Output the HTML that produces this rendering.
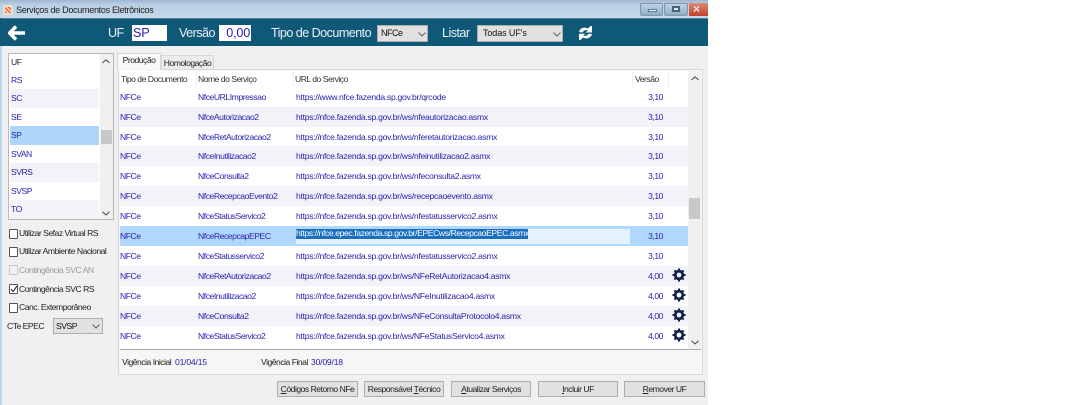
<!DOCTYPE html>
<html><head><meta charset="utf-8"><style>
html,body{margin:0;padding:0;background:#fff}
#w{position:relative;width:1080px;height:405px;overflow:hidden;background:#fff;font-family:"Liberation Sans",sans-serif;font-size:8.6px;letter-spacing:-.5px;color:#222;filter:blur(.35px)}
#w div,#w span.a{position:absolute;white-space:nowrap;box-sizing:border-box}
.t{line-height:12px;height:12px}
.b{color:#2a22b0}
.r{left:120px;width:568px;height:20px}
.alt{background:#f2f2f8}
.r span{position:absolute;top:4px;line-height:12px;color:#2a22b0;white-space:nowrap;letter-spacing:-.45px}
.r .c1{left:0}.r .c2{left:78px}.r .c3{left:176px;letter-spacing:-.28px}.r .c4{right:25px}
.r svg{position:absolute;left:552px;top:2px}
.li{left:10px;width:89px;height:18.5px;line-height:18px;color:#2a22b0;padding-left:1px}
.cb{left:9px;width:9px;height:10px;border:1px solid #555;background:#fff;border-radius:1px}
.btn{top:381px;height:16px;background:#e1e1e1;border:1px solid #adadad;text-align:center;line-height:14px;color:#222}
.sel{background:#e1e1e1;border:1px solid #adadad;color:#111;line-height:15px}
.hl{color:#eaf2f6;font-size:12.6px;letter-spacing:-.55px;line-height:16px;top:25px}
.hd{top:73px;color:#333;line-height:12px}
.sep{top:72px;width:1px;height:15px;background:#eee}
u{text-decoration:underline}
</style></head><body><div id="w">
<div style="left:0;top:0;width:708px;height:405px;background:#f0f0f0"></div>
<div style="left:0;top:46px;width:2px;height:359px;background:#bcd4ec"></div>
<div style="left:0;top:0;width:708px;height:18px;background:linear-gradient(#9db7d0,#b9d0e4 25%,#c6d9ea)"></div>
<div style="left:3px;top:5px;width:10px;height:10px;background:#f6d9c8;border:1px solid #e8e0d8"></div>
<div style="left:5px;top:7px;width:6px;height:6px;background:repeating-linear-gradient(45deg,#e8692a 0 1.5px,#f8e0d0 1.5px 3px)"></div>
<div class="t" style="left:16px;top:4px;font-size:9.1px;letter-spacing:-.33px;color:#222">Serviços de Documentos Eletrônicos</div>
<div style="left:640px;top:3px;width:23px;height:13px;background:linear-gradient(#c0d4e6,#8eabc6);border:1px solid #7e97ae;border-radius:2px"></div>
<div style="left:648px;top:9px;width:8px;height:2px;background:#eef4f8;border:1px solid #5d7a94;box-sizing:content-box;height:1px;width:7px"></div>
<div style="left:664px;top:3px;width:24px;height:13px;background:linear-gradient(#c0d4e6,#8eabc6);border:1px solid #7e97ae;border-radius:2px"></div>
<div style="left:672px;top:6px;width:8px;height:6px;border:2px solid #46627c;background:#dfe9f2"></div>
<div style="left:689px;top:3px;width:19px;height:13px;background:linear-gradient(#d98a78,#c4402c)"></div>
<div style="left:693px;top:1px;font-size:12px;font-weight:bold;color:#f4e8e4;line-height:16px">×</div>

<div style="left:0;top:18px;width:708px;height:28px;background:#0f5878"></div>
<div style="left:1px;top:18px;width:707px;height:1px;background:#4e7f9a"></div>
<svg style="position:absolute;left:8px;top:25px" width="18" height="16" viewBox="0 0 18 16"><path d="M8 1.5 L1.5 8 L8 14.5 M2.5 8 H17" fill="none" stroke="#fff" stroke-width="3.4"/></svg>
<div class="hl" style="left:108px">UF</div>
<div style="left:132px;top:25px;width:35px;height:16px;background:#fff;color:#2a22b0;font-size:12.6px;letter-spacing:-.2px;line-height:16px;padding-left:1px">SP</div>
<div class="hl" style="left:179px">Versão</div>
<div style="left:219px;top:25px;width:32px;height:16px;background:#fff;color:#2a22b0;font-size:12.6px;letter-spacing:-.2px;line-height:16px;text-align:right;padding-right:1px">0,00</div>
<div class="hl" style="left:271px">Tipo de Documento</div>
<div class="sel" style="left:377px;top:25px;width:51px;height:17px;font-size:9px;padding-left:3px">NFCe</div>
<svg style="position:absolute;left:418px;top:32px" width="8" height="5"><path d="M.5 .5L4 4L7.500 .5" fill="none" stroke="#666"/></svg>
<div class="hl" style="left:442px">Listar</div>
<div class="sel" style="left:477px;top:25px;width:86px;height:17px;font-size:9px;letter-spacing:-.1px;padding-left:5px">Todas UF's</div>
<svg style="position:absolute;left:553px;top:32px" width="8" height="5"><path d="M.5 .5L4 4L7.500 .5" fill="none" stroke="#666"/></svg>
<svg style="position:absolute;left:577px;top:25px" width="17" height="16" viewBox="0 0 17 16"><path d="M2 7 C3 3 7 1.500 11 3.500 L13.500 1 L15 1 V7.500 H8.500 L11 5.500 C8.500 4.500 6.500 5.500 5.500 7.500 Z M15 9 C14 13 10 14.500 6 12.500 L3.500 15 L2 15 V8.700 H8.500 L6 10.500 C8.500 11.500 10.500 10.500 11.500 8.700 Z" fill="#fff"/></svg>

<!-- left list -->
<div style="left:8px;top:53px;width:106px;height:167px;background:#fff;border:1px solid #b8b8b8"></div>
<div class="li" style="top:53px;color:#222">UF</div>
<div class="li" style="top:71px">RS</div>
<div class="li alt" style="top:89px">SC</div>
<div class="li" style="top:108px">SE</div>
<div class="li" style="top:126px;background:#aed6fb">SP</div>
<div class="li" style="top:145px">SVAN</div>
<div class="li alt" style="top:163px">SVRS</div>
<div class="li" style="top:182px">SVSP</div>
<div class="li alt" style="top:200px">TO</div>
<div style="left:100px;top:54px;width:13px;height:165px;background:#f0f0f0"></div>
<div style="left:101px;top:130px;width:11px;height:14px;background:#c8c8c8"></div>
<svg style="position:absolute;left:102px;top:59px" width="8" height="5"><path d="M.5 4L4 .8L7.500 4" fill="none" stroke="#444"/></svg>
<svg style="position:absolute;left:102px;top:211px" width="8" height="5"><path d="M.5 .8L4 4L7.500 .8" fill="none" stroke="#444"/></svg>

<div class="cb" style="top:229px"></div><div class="t" style="left:19px;top:227px">Utilizar Sefaz Virtual RS</div>
<div class="cb" style="top:247px"></div><div class="t" style="left:19px;top:245px">Utilizar Ambiente Nacional</div>
<div class="cb" style="top:265px;border-color:#c8c8c8;background:#f0f0f0"></div><div class="t" style="left:19px;top:264px;color:#9a9a9a">Contingência SVC AN</div>
<div class="cb" style="top:284px"></div><div class="t" style="left:19px;top:283px">Contingência SVC RS</div>
<svg style="position:absolute;left:10px;top:285px" width="8" height="8"><path d="M1 4L3.200 6.500L7 1" fill="none" stroke="#333" stroke-width="1.100"/></svg>
<div class="cb" style="top:303px"></div><div class="t" style="left:19px;top:301px">Canc. Extemporâneo</div>
<div class="t" style="left:7px;top:320px">CTe EPEC</div>
<div class="sel" style="left:53px;top:318px;width:50px;height:16px;padding-left:2px;font-size:8.600px;line-height:14px">SVSP</div>
<svg style="position:absolute;left:92px;top:324px" width="8" height="5"><path d="M.5 .5L4 4L7.500 .5" fill="none" stroke="#666"/></svg>

<!-- tabs & frame -->
<div style="left:118px;top:69px;width:585px;height:306px;background:#f6f6f6;border:1px solid #d8d8d8"></div>
<div class="t" style="left:161px;top:55px;width:53px;height:15px;background:#ececec;border:1px solid #d8d8d8;text-align:center;line-height:14px">Homologação</div>
<div class="t" style="left:117px;top:53px;width:44px;height:17px;background:#f8f8f8;border:1px solid #d8d8d8;border-bottom:0;text-align:center;line-height:13px">Produção</div>

<!-- grid -->
<div style="left:120px;top:71px;width:581px;height:279px;background:#fff;border-bottom:1px solid #a8a8a8"></div>
<div style="left:120px;top:71px;width:568px;height:16px;background:#fff"></div>
<div class="hd" style="left:121px">Tipo de Documento</div>
<div class="hd" style="left:198px">Nome do Serviço</div>
<div class="hd" style="left:295px">URL do Serviço</div>
<div class="hd" style="left:635px">Versão</div>
<div class="sep" style="left:196px"></div><div class="sep" style="left:293px"></div><div class="sep" style="left:632px"></div><div class="sep" style="left:668px"></div>

<div class="r" style="top:87px"><span class="c1">NFCe</span><span class="c2">NfceURLImpressao</span><span class="c3">https://www.nfce.fazenda.sp.gov.br/qrcode</span><span class="c4">3,10</span></div>
<div class="r alt" style="top:106.500px"><span class="c1">NFCe</span><span class="c2">NfceAutorizacao2</span><span class="c3">https://nfce.fazenda.sp.gov.br/ws/nfeautorizacao.asmx</span><span class="c4">3,10</span></div>
<div class="r" style="top:126.500px"><span class="c1">NFCe</span><span class="c2">NfceRetAutorizacao2</span><span class="c3">https://nfce.fazenda.sp.gov.br/ws/nferetautorizacao.asmx</span><span class="c4">3,10</span></div>
<div class="r alt" style="top:146px"><span class="c1">NFCe</span><span class="c2">NfceInutilizacao2</span><span class="c3">https://nfce.fazenda.sp.gov.br/ws/nfeinutilizacao2.asmx</span><span class="c4">3,10</span></div>
<div class="r" style="top:166px"><span class="c1">NFCe</span><span class="c2">NfceConsulta2</span><span class="c3">https://nfce.fazenda.sp.gov.br/ws/nfeconsulta2.asmx</span><span class="c4">3,10</span></div>
<div class="r alt" style="top:186px"><span class="c1">NFCe</span><span class="c2">NfceRecepcaoEvento2</span><span class="c3">https://nfce.fazenda.sp.gov.br/ws/recepcaoevento.asmx</span><span class="c4">3,10</span></div>
<div class="r" style="top:206px"><span class="c1">NFCe</span><span class="c2">NfceStatusServico2</span><span class="c3">https://nfce.fazenda.sp.gov.br/ws/nfestatusservico2.asmx</span><span class="c4">3,10</span></div>
<div class="r" style="top:226px;background:#b0d7fc;height:20px"><span class="c1">NFCe</span><span class="c2">NfceRecepcapEPEC</span><span class="c4">3,10</span></div>
<div style="left:296px;top:229px;width:334px;height:15px;background:#e4f1fe"></div>
<div style="left:296px;top:229px;width:232px;height:10px;background:#1a6fc0;color:#fff;line-height:9px;letter-spacing:-.4px;overflow:hidden">https://nfce.epec.fazenda.sp.gov.br/EPECws/RecepcaoEPEC.asmx</div>
<div class="r" style="top:246px"><span class="c1">NFCe</span><span class="c2">NfceStatusservico2</span><span class="c3">https://nfce.fazenda.sp.gov.br/ws/nfestatusservico2.asmx</span><span class="c4">3,10</span></div>
<div class="r alt" style="top:266px"><span class="c1">NFCe</span><span class="c2">NfceRetAutorizacao2</span><span class="c3">https://nfce.fazenda.sp.gov.br/ws/NFeRetAutorizacao4.asmx</span><span class="c4">4,00</span><svg width="14" height="14" viewBox="0 0 14 14"><circle cx="7" cy="7" r="3.800" fill="none" stroke="#10224a" stroke-width="2.800"/><path d="M7 .5V13.500M.5 7H13.500M2.400 2.400L11.600 11.600M11.600 2.400L2.400 11.600" stroke="#10224a" stroke-width="2"/><circle cx="7" cy="7" r="2.400" fill="#f2f2f8"/></svg></div>
<div class="r" style="top:286px"><span class="c1">NFCe</span><span class="c2">NfceInutilizacao2</span><span class="c3">https://nfce.fazenda.sp.gov.br/ws/NFeInutilizacao4.asmx</span><span class="c4">4,00</span><svg width="14" height="14" viewBox="0 0 14 14"><circle cx="7" cy="7" r="3.800" fill="none" stroke="#10224a" stroke-width="2.800"/><path d="M7 .5V13.500M.5 7H13.500M2.400 2.400L11.600 11.600M11.600 2.400L2.400 11.600" stroke="#10224a" stroke-width="2"/><circle cx="7" cy="7" r="2.400" fill="#fff"/></svg></div>
<div class="r alt" style="top:306px"><span class="c1">NFCe</span><span class="c2">NfceConsulta2</span><span class="c3">https://nfce.fazenda.sp.gov.br/ws/NFeConsultaProtocolo4.asmx</span><span class="c4">4,00</span><svg width="14" height="14" viewBox="0 0 14 14"><circle cx="7" cy="7" r="3.800" fill="none" stroke="#10224a" stroke-width="2.800"/><path d="M7 .5V13.500M.5 7H13.500M2.400 2.400L11.600 11.600M11.600 2.400L2.400 11.600" stroke="#10224a" stroke-width="2"/><circle cx="7" cy="7" r="2.400" fill="#f2f2f8"/></svg></div>
<div class="r" style="top:326px"><span class="c1">NFCe</span><span class="c2">NfceStatusServico2</span><span class="c3">https://nfce.fazenda.sp.gov.br/ws/NFeStatusServico4.asmx</span><span class="c4">4,00</span><svg width="14" height="14" viewBox="0 0 14 14"><circle cx="7" cy="7" r="3.800" fill="none" stroke="#10224a" stroke-width="2.800"/><path d="M7 .5V13.500M.5 7H13.500M2.400 2.400L11.600 11.600M11.600 2.400L2.400 11.600" stroke="#10224a" stroke-width="2"/><circle cx="7" cy="7" r="2.400" fill="#fff"/></svg></div>

<div style="left:688px;top:71px;width:13px;height:278px;background:#f0f0f0"></div>
<div style="left:689px;top:198px;width:11px;height:21px;background:#c8c8c8"></div>
<svg style="position:absolute;left:691px;top:76px" width="8" height="5"><path d="M.5 4L4 .8L7.500 4" fill="none" stroke="#444"/></svg>
<svg style="position:absolute;left:691px;top:340px" width="8" height="5"><path d="M.5 .8L4 4L7.500 .8" fill="none" stroke="#444"/></svg>

<div class="t" style="left:122px;top:356px">Vigência Inicial</div>
<div class="t b" style="left:175px;top:356px;letter-spacing:-.2px">01/04/15</div>
<div class="t" style="left:261px;top:356px">Vigência Final</div>
<div class="t b" style="left:311px;top:356px;letter-spacing:-.2px">30/09/18</div>

<div class="btn" style="left:277px;width:81px"><u>C</u>ódigos Retorno NFe</div>
<div class="btn" style="left:364px;width:80px">Responsável <u>T</u>écnico</div>
<div class="btn" style="left:451px;width:80px"><u>A</u>tualizar Serviços</div>
<div class="btn" style="left:538px;width:80px"><u>I</u>ncluir UF</div>
<div class="btn" style="left:624px;width:81px"><u>R</u>emover UF</div>
</div></body></html>
